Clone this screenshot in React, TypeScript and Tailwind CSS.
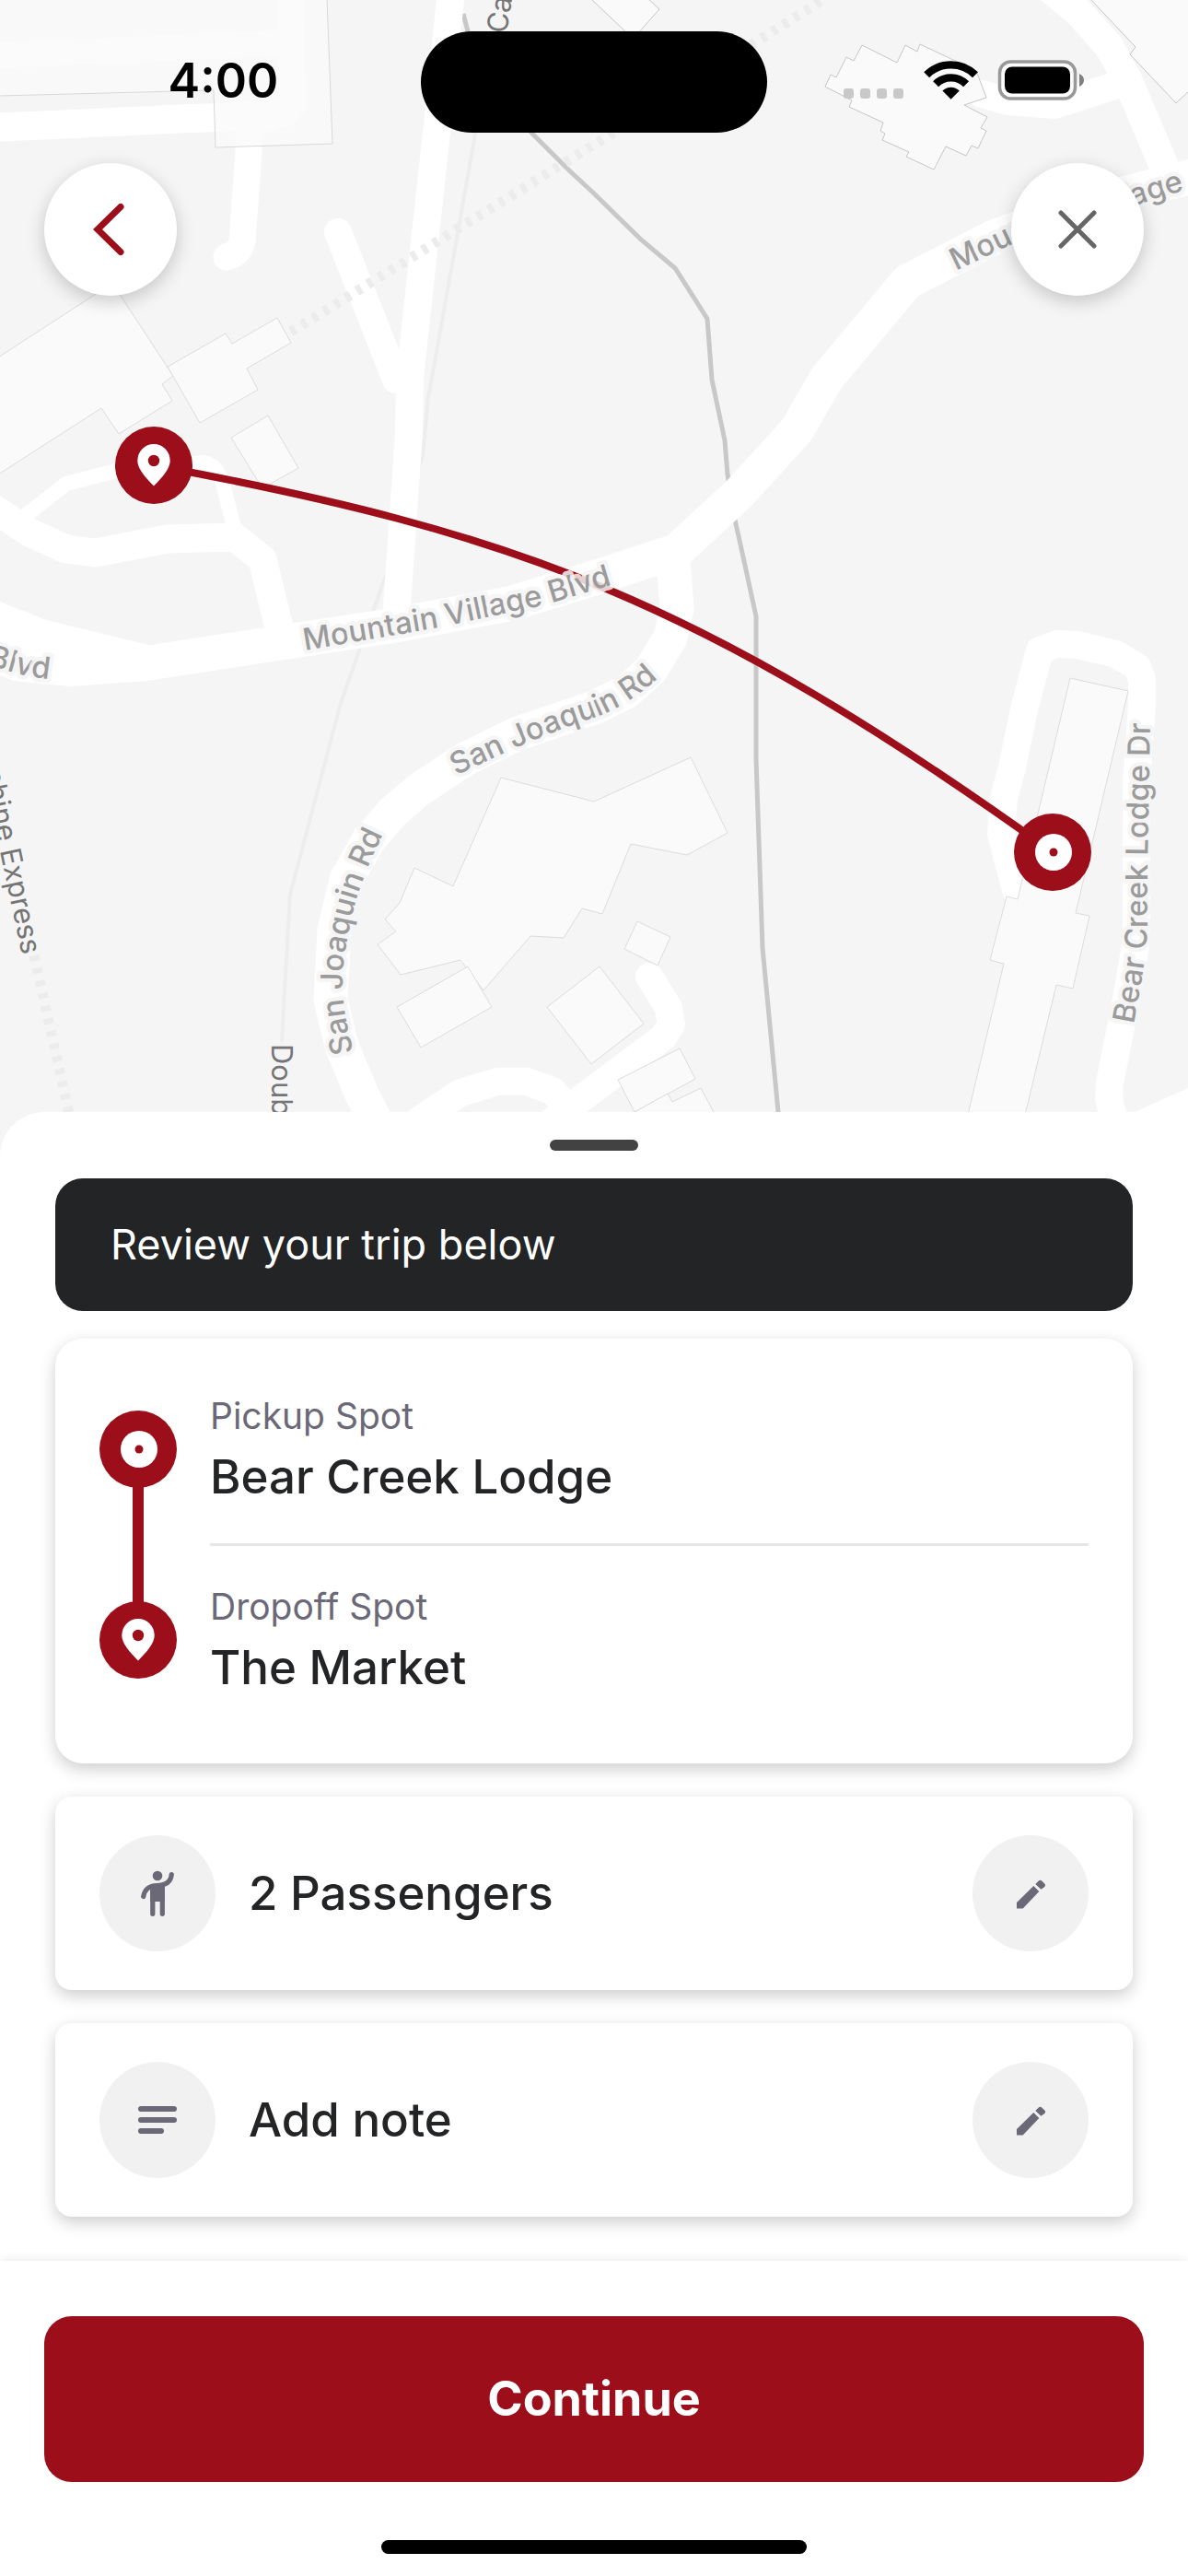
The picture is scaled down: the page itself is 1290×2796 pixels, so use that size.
import type { ReactNode } from "react";

type Stop = {
  label: string;
  name: string;
};

type MapLabel = {
  id: string;
  d: string;
  text: string;
};

const stops: Stop[] = [
  { label: "Pickup Spot", name: "Bear Creek Lodge" },
  { label: "Dropoff Spot", name: "The Market" },
];

const roads: { d: string; width: number }[] = [
  { d: "M0 138L90 134L195 129L250 127L310 122", width: 31 },
  { d: "M0 60L230 50L316 46M316 0L318 115L270 138", width: 28 },
  { d: "M270 130L270 165L263 262Q260 275 246 279", width: 29 },
  { d: "M367 252L430 412", width: 30 },
  { d: "M490 -10L474 144L445 410L444 470L435 600L430 672", width: 30 },
  { d: "M22 564L72 525L130 510L222 502Q236 505 242 525L256 580", width: 16 },
  { d: "M-10 550L32 578L72 596L103 600L182 585L255 583L285 607L305 690", width: 31 },
  {
    d: "M140 719L165 719L420 680L555 655L650 626L735 598L803 535L865 467L898 410L985 306L1080 257L1175 222L1300 190",
    width: 38,
  },
  {
    d: "M731 610L735 660L728 692L706 728L680 751L645 768L560 797L505 824L455 857L427 881L400 912L376 955L363 1010L359 1085L371 1135L393 1188L425 1250",
    width: 37,
  },
  { d: "M420 1250L455 1216L500 1186L540 1174L572 1174L600 1184L620 1206", width: 30 },
  { d: "M705 1060L726 1094L729 1112L720 1126L605 1212L570 1250", width: 30 },
  {
    d: "M1103 966L1087 905L1090 867L1099 833L1112 770L1129 706L1148 699L1170 700L1212 710L1235 724L1240 738L1240 765L1234 850L1234 1020L1222 1090L1205 1175L1204 1192L1216 1240",
    width: 30,
  },
  { d: "M1066 102L1095 110L1145 114L1220 90", width: 30 },
  { d: "M1143 -10L1172 14L1204 50L1225 88L1268 190", width: 32 },
];

const buildings: string[] = [
  "-2,388 118,310 131,321 188,408 176,417 187,435 129,471 110,443 -2,515",
  "182,398 245,362 252,373 301,345 316,372 268,400 280,423 217,459",
  "251,475 291,451 324,508 285,530",
  "544,844 645,870 750,822 790,904 746,928 685,916 654,992 632,986 612,1018 576,1016 525,1075 500,1042 435,1058 410,1025 430,1011 418,998 434,980 450,942 492,962",
  "508,1049 534,1093 457,1137 431,1093",
  "594,1093 651,1049 699,1111 642,1155",
  "692,1000 728,1017 714,1048 678,1030",
  "671,1172 738,1138 755,1171 689,1207",
  "689,1207 725,1187 730,1196 761,1181 790,1235 680,1235",
  "1162,736 1225,750 1168,991 1183,994 1165,1073 1147,1069 1102,1256 1040,1256 1090,1046 1075,1042 1093,973 1105,976",
];

const darkEdgeBuildings: string[] = [
  "936,49 974,68 983,49 996,56 999,48 1033,64 1060,77 1071,106 1047,114 1072,127 1065,139 1071,142 1062,161 1055,158 1049,169 1027,159 1014,184 984,170 987,165 958,152 961,145 956,142 959,133 922,116 925,109 896,94 902,81 908,84 919,62 927,66",
  "1183,-2 1233,51 1227,59 1277,112 1292,98 1292,-2",
  "642,-1 682,37 692,37 716,10 704,-1",
];

const roadLabels: MapLabel[] = [
  { id: "village-mid", d: "M331 706L477 681L590 657L720 618", text: "Mountain Village Blvd" },
  { id: "village-east", d: "M1038 294L1105 262L1320 196", text: "Mountain Village" },
  { id: "village-west", d: "M-14 722L29 734L90 742", text: "Blvd" },
  {
    id: "joaquin-north",
    d: "M495 842Q585 798 645 779Q700 760 745 702",
    text: "San Joaquin Rd",
  },
  {
    id: "joaquin-west",
    d: "M384 1142C370 1090 369 1060 377 1020C385 975 394 950 423 890",
    text: "San Joaquin Rd",
  },
  {
    id: "lodge",
    d: "M1231 1112Q1246 1035 1246 1000L1246 940L1250 740",
    text: "Bear Creek Lodge Dr",
  },
];

function DotMarker() {
  return (
    <>
      <circle r="42" fill="#9b0e1a" />
      <circle cx="1" r="20" fill="#fff" />
      <circle cx="1" r="4.5" fill="#9b0e1a" />
    </>
  );
}

function PinMarker() {
  return (
    <>
      <circle r="42" fill="#9b0e1a" />
      <path
        d="M0 22.5C-4 18-17.700 6-17.700-5a17.700 18 0 0 1 35.400 0C17.700 6 4 18 0 22.500Z"
        fill="#fff"
      />
      <circle cy="-5" r="6.200" fill="#9b0e1a" />
    </>
  );
}

function TripMap() {
  return (
    <svg
      viewBox="0 0 1290 1255"
      className="block h-auto w-full bg-[#f5f5f5]"
      role="img"
      aria-label="Route map"
    >
      <defs>
        {roadLabels.map((label) => (
          <path key={label.id} id={label.id} d={label.d} />
        ))}
      </defs>

      <path
        d="M517 140L491 287L465 432L459 494L425 610L413 641L370 763L315 971L306 1131"
        fill="none"
        stroke="#ededed"
        strokeWidth="4"
      />
      <path
        d="M503 15L508 34L540 100L578 145L617 184L645 210L696 260L733 291L768 346L773 412L787 478L790 515L798 564L806 600L821 669L821 824L828 1029L845 1207L848 1256"
        fill="none"
        stroke="#c8c8c8"
        strokeWidth="5"
      />

      <path d="M0 653L50 673L161 700V739L76 745L15 739L0 733Z" fill="#fff" />
      <path d="M1290 1181L1230 1208V1256H1290Z" fill="#fff" />
      {roads.map((road) => (
        <path
          key={road.d}
          d={road.d}
          fill="none"
          stroke="#fff"
          strokeWidth={road.width}
          strokeLinecap="round"
          strokeLinejoin="round"
        />
      ))}

      {/* lifts and trails */}
      <path
        d="M292 375L645 157L893 0M37 1037L74 1204L86 1256"
        fill="none"
        stroke="#ececec"
        strokeWidth="11"
        strokeDasharray="6 8"
      />

      <polygon
        points="-2,-2 355,-2 361,156 234,160 232,98 -2,104"
        fill="#fafafa"
        fillOpacity="0.75"
        stroke="#d8d8d8"
      />
      {buildings.map((points) => (
        <polygon key={points} points={points} fill="#fafafa" stroke="#dcdcdc" />
      ))}
      {darkEdgeBuildings.map((points) => (
        <polygon key={points} points={points} fill="#fafafa" stroke="#c6c6c6" />
      ))}

      <path
        d="M167 505C560 578 760 650 1143 925"
        fill="none"
        stroke="#9b0e1a"
        strokeWidth="8"
      />

      <g
        fill="#9b9b9b"
        stroke="#f5f5f5"
        strokeOpacity="0.85"
        strokeWidth="9"
        strokeLinejoin="round"
        paintOrder="stroke"
        className="text-[33px] font-medium"
      >
        {roadLabels.map((label) => (
          <text key={label.id}>
            <textPath href={`#${label.id}`}>{label.text}</textPath>
          </text>
        ))}
      </g>
      <g
        fill="#757575"
        stroke="#f5f5f5"
        strokeWidth="5"
        paintOrder="stroke"
        className="text-[31px]"
      >
        <text transform="translate(550 37) rotate(-81)">Ca</text>
        <text transform="translate(24 1037) rotate(78)" textAnchor="end">
          Sunshine Express
        </text>
        <text transform="translate(295 1133) rotate(90)">Doub</text>
      </g>

      <g transform="translate(167 505)">
        <PinMarker />
      </g>
      <g transform="translate(1143 925)">
        <DotMarker />
      </g>
    </svg>
  );
}

function StatusBar() {
  return (
    <div className="grid grid-cols-[1fr_376px_1fr] items-center pt-[34px]">
      <time className="pb-0.5 pl-7 text-center text-[52px] leading-[60px] font-semibold text-black">
        4:00
      </time>
      <div className="h-[110px] rounded-full bg-black" />
      <div className="flex justify-end pr-28 pb-1">
        <svg viewBox="0 0 264 44" className="h-11 w-[264px]" aria-hidden="true">
          <g fill="#c8c8c8">
            <rect x="2" y="31" width="11" height="11" rx="3" />
            <rect x="20" y="31" width="11" height="11" rx="3" />
            <rect x="38" y="31" width="11" height="11" rx="3" />
            <rect x="56" y="31" width="11" height="11" rx="3" />
          </g>
          <g fill="none" stroke="#000" strokeWidth="8.4">
            <path d="M92.200 16.300A37.300 37.300 0 0 1 145 16.300" />
            <path d="M102.100 26.200A23.300 23.300 0 0 1 135.100 26.200" />
          </g>
          <path d="M118.600 42.700L109.400 33.500A13 13 0 0 1 127.800 33.500Z" />
          <rect
            x="171.500"
            y="2"
            width="82"
            height="40"
            rx="12"
            fill="#fff"
            fillOpacity="0.6"
            stroke="#999"
            strokeWidth="3.5"
          />
          <rect x="177" y="7.500" width="71" height="29" rx="8" />
          <path d="M258 15Q263 17.500 263 22T258 29Z" fill="#808080" />
        </svg>
      </div>
    </div>
  );
}

function RoundButton({ label, children }: { label: string; children: ReactNode }) {
  return (
    <button
      type="button"
      aria-label={label}
      className="flex size-36 items-center justify-center rounded-full bg-white shadow-[0_6px_20px_rgba(0,0,0,0.2)]"
    >
      {children}
    </button>
  );
}

function DetailRow({ icon, title, action }: { icon: ReactNode; title: string; action: string }) {
  return (
    <section className="flex items-center gap-9 rounded-[18px] bg-white px-12 py-[42px] shadow-[0_6px_18px_rgba(0,0,0,0.2)]">
      <span className="size-[126px] rounded-full bg-[#f1f1f1]">
        <svg viewBox="-63 -63 126 126" className="size-full" aria-hidden="true">
          {icon}
        </svg>
      </span>
      <h2 className="flex-1 text-[51px] leading-[60px] font-medium">{title}</h2>
      <button type="button" aria-label={action} className="size-[126px] rounded-full bg-[#f1f1f1]">
        <svg viewBox="-63 -63 126 126" className="size-full" fill="#6b6877" aria-hidden="true">
          <path d="M-15 10L3.300-7.900L9.300-1.900L-8.300 16.500H-15Z" />
          <path d="M5.300-10L8.800-13.500Q10.500-15.200 12.200-13.500L15.300-10.400Q17-8.700 15.300-7L11.400-4.200Z" />
        </svg>
      </button>
    </section>
  );
}

export default function App() {
  return (
    <main className="flex min-h-screen flex-col bg-white font-['Inter',sans-serif] text-[#232426]">
      <div className="relative">
        <TripMap />
        <header className="absolute inset-x-0 top-0">
          <StatusBar />
          <nav className="flex justify-between px-12 pt-[33px]">
            <RoundButton label="Back">
              <svg viewBox="0 0 60 60" className="size-[60px]" aria-hidden="true">
                <path
                  d="M41 5.500L16 30L41 54.500"
                  fill="none"
                  stroke="#9b0e1a"
                  strokeWidth="7"
                  strokeLinecap="round"
                />
              </svg>
            </RoundButton>
            <RoundButton label="Close">
              <svg viewBox="0 0 60 60" className="size-[60px]" aria-hidden="true">
                <path
                  d="M12 12L48 48M48 12L12 48"
                  stroke="#666"
                  strokeWidth="5"
                  strokeLinecap="round"
                />
              </svg>
            </RoundButton>
          </nav>
        </header>
      </div>

      <div className="relative -mt-12 flex flex-1 flex-col rounded-t-[48px] bg-white pt-[30px]">
        <div className="mx-auto h-3 w-24 rounded-full bg-[#424242]" />
        <div className="flex flex-col gap-9 px-[60px] pt-[30px] pb-12">
          <div className="flex flex-col gap-[30px]">
            <p className="rounded-[30px] bg-[#232426] px-[60px] py-[42px] text-[45px] leading-[60px] text-white">
              Review your trip below
            </p>

            <section className="flex gap-9 rounded-[30px] bg-white px-12 pt-[60px] pb-[74px] shadow-[0_6px_18px_rgba(0,0,0,0.2)]">
              <div className="flex flex-col items-center py-[18px]">
                <svg viewBox="-42 -42 84 84" className="size-[84px]" aria-hidden="true">
                  <DotMarker />
                </svg>
                <div className="-my-1 w-3 flex-1 bg-[#9b0e1a]" />
                <svg viewBox="-42 -42 84 84" className="size-[84px]" aria-hidden="true">
                  <PinMarker />
                </svg>
              </div>
              <dl className="flex flex-1 flex-col gap-[42px] divide-y-[3px] divide-[#e7e7ea]">
                {stops.map((stop) => (
                  <div key={stop.label} className="flex flex-col gap-3 not-last:pb-[42px]">
                    <dt className="text-[39px] leading-[48px] text-[#6b6877]">{stop.label}</dt>
                    <dd className="text-[51px] leading-[60px] font-medium">{stop.name}</dd>
                  </div>
                ))}
              </dl>
            </section>
          </div>

          <DetailRow
            title="2 Passengers"
            action="Edit passengers"
            icon={
              <g fill="#6b6877" stroke="none">
                <circle cy="-19" r="5.300" />
                <path
                  d="M-15.300 3.500C-14-4-9-8.500-1-8.500C9-8.500 14.500-12 15.300-20.500M-5.200-6V22.300M5.300-6V22.300"
                  fill="none"
                  stroke="#6b6877"
                  strokeWidth="5.200"
                  strokeLinecap="round"
                />
                <rect x="-7.800" y="-9" width="15.600" height="18" />
              </g>
            }
          />
          <DetailRow
            title="Add note"
            action="Edit note"
            icon={
              <path
                d="M-18-12H18M-18 0H18M-18 12H4"
                stroke="#6b6877"
                strokeWidth="6"
                strokeLinecap="round"
              />
            }
          />
        </div>

        <footer className="flex flex-1 flex-col bg-white px-12 pt-[60px] pb-6 shadow-[0_-3px_9px_rgba(0,0,0,0.06)]">
          <button
            type="button"
            className="h-[180px] rounded-[30px] bg-[#9b0e1a] text-[52px] font-bold text-white"
          >
            Continue
          </button>
          <div className="mx-auto mt-[63px] h-[15px] w-[462px] rounded-full bg-black" />
        </footer>
      </div>
    </main>
  );
}
